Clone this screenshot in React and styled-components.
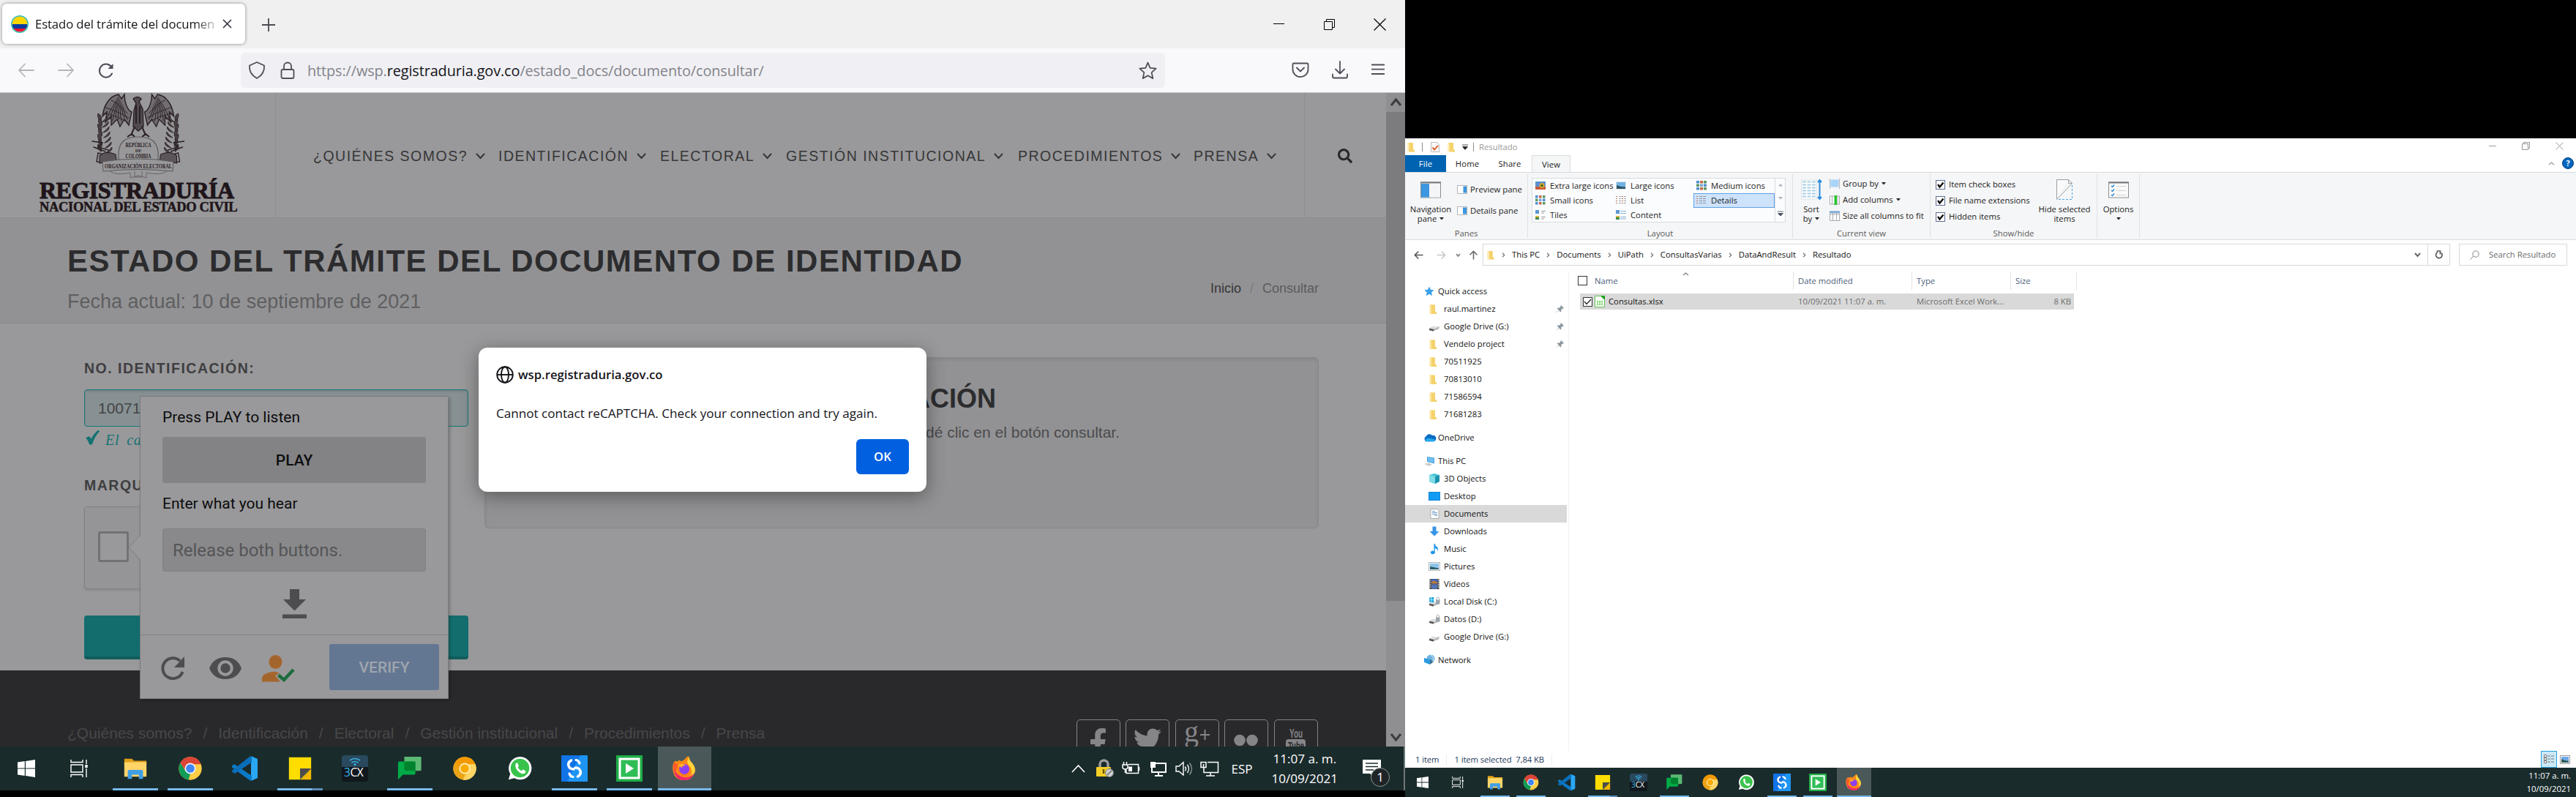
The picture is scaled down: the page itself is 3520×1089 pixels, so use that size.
import React from "react";
import styled, { createGlobalStyle, css } from "styled-components";
import { FaSearch, FaFacebookF, FaTwitter } from "react-icons/fa";

const ui = `"Open Sans", "Noto Sans", sans-serif`;
const arial = `"Liberation Sans", Arial, sans-serif`;
const roboto = `Roboto, sans-serif`;

const Global = createGlobalStyle`
  * { box-sizing: border-box; }
  html, body { margin: 0; padding: 0; background: #000; }
  svg { display: block; flex: none; overflow: visible; }
`;

const Desktop = styled.div`
  display: grid;
  grid-template-columns: 1920px 1600px;
  width: 3520px;
  height: 1089px;
  overflow: hidden;
  background: #000;
  white-space: nowrap;
`;
const Monitor = styled.div`
  display: flex;
  flex-direction: column;
  height: 1089px;
  padding-top: ${(p) => p.$top || 0}px;
`;
const Grow = styled.div`flex: 1;`;

/* ---------- browser chrome ---------- */
const TabStrip = styled.div`
  height: 66px;
  background: #f0f0f0;
  display: flex;
  padding: 5px 0 6px 3px;
`;
const Tab = styled.div`
  width: 332px;
  height: 55px;
  border-radius: 6px;
  background: #fff;
  box-shadow: 0 0 4px rgba(0, 0, 0, 0.45);
  display: flex;
  align-items: center;
  padding: 0 18px 0 12px;
  font: 16.7px/24px ${ui};
  color: #15141a;
`;
const TabTitle = styled.div`
  width: 252px;
  margin: 0 4px 0 9px;
  overflow: hidden;
  letter-spacing: -0.1px;
  -webkit-mask-image: linear-gradient(to right, #000 218px, transparent 254px);
`;
const NewTab = styled.div`
  margin: 3px 0 0 22px;
  height: 52px;
  display: flex;
  align-items: center;
`;
const WindowButtons = styled.div`
  display: flex;
  margin-top: -5px;
  height: 66px;
`;
const WindowButton = styled.div`
  width: 69px;
  display: flex;
  align-items: center;
  justify-content: center;
`;
const Toolbar = styled.div`
  height: 61px;
  background: #f9f9fb;
  border-bottom: 1px solid #c6c6c8;
  display: flex;
  align-items: center;
  padding: 0 23px 0 23px;
`;
const NavButtons = styled.div`
  width: 306px;
  display: flex;
  gap: 30px;
`;
const UrlBar = styled.div`
  width: 1263px;
  height: 48px;
  border-radius: 6px;
  background: #f0f0f4;
  display: flex;
  align-items: center;
  padding: 0 11px 0 10px;
  font: 19.9px/28px ${ui};
  letter-spacing: -0.12px;
  color: #83838a;
  b { font-weight: 400; color: #15141a; }
`;
const UrlText = styled.div`
  margin: 1px 0 0 17px;
  flex: 1;
`;
const ToolbarRight = styled.div`
  display: flex;
  gap: 30px;
  margin-left: 173px;
`;

/* ---------- web page ---------- */
const Viewport = styled.div`
  position: relative;
  height: 893px;
  display: flex;
  overflow: hidden;
  background: #99999b;
`;
const Page = styled.div`
  width: 1894px;
  font-family: ${arial};
`;
const Header = styled.div`
  height: 171px;
  display: flex;
  border-bottom: 1px solid #8c8c8e;
`;
const LogoCell = styled.div`
  width: 377px;
  border-right: 1px solid #8f8f91;
  padding: 0 0 0 54px;
  color: #20151a;
  font-family: "Liberation Serif", serif;
  font-weight: 700;
`;
const LogoName = styled.div`
  font-size: 32px;
  line-height: 30px;
  margin-top: -1px;
  letter-spacing: -0.5px;
  -webkit-text-stroke: 1px #20151a;
`;
const LogoSub = styled.div`
  font-size: 18.5px;
  line-height: 16px;
  letter-spacing: -0.34px;
  -webkit-text-stroke: 0.5px #20151a;
`;
const Menu = styled.div`
  width: 1406px;
  border-right: 1px solid #8f8f91;
  padding: 2px 0 0 51px;
  display: flex;
  align-items: center;
`;
const MenuItem = styled.div`
  width: ${(p) => p.$w}px;
  display: flex;
  align-items: center;
  gap: 11px;
  font-size: 19.5px;
  line-height: 24px;
  letter-spacing: 1.5px;
  color: #363638;
`;
const SearchCell = styled.div`
  flex: 1;
  padding: 2px 0 0 45px;
  display: flex;
  align-items: center;
  color: #29292b;
`;
const Band = styled.div`
  height: 144px;
  background: #929294;
  border-bottom: 1px solid #8a8a8c;
  padding: 0 92px;
  display: flex;
  justify-content: space-between;
`;
const BandTitle = styled.h1`
  margin: 34px 0 0 0;
  font-size: 42px;
  line-height: 50px;
  letter-spacing: 1.5px;
  color: #2c2c2e;
`;
const BandSub = styled.div`
  margin-top: 15px;
  font-size: 27px;
  line-height: 30px;
  color: #5f5f61;
`;
const Crumbs = styled.div`
  padding-top: 84px;
  display: flex;
  gap: 12px;
  font-size: 18px;
  line-height: 24px;
  color: #5a5a5c;
  span:first-child { color: #353537; }
  span:nth-child(2) { color: #79797b; }
`;
const Main = styled.div`
  height: 474px;
  display: flex;
  padding-left: 115px;
`;
const Form = styled.div`
  width: 525px;
  padding-top: 49px;
`;
const Label = styled.div`
  margin-top: ${(p) => p.$mt || 0}px;
  font-size: 19.5px;
  line-height: 24px;
  font-weight: 700;
  letter-spacing: 1.5px;
  color: #3e3e40;
`;
const TextInput = styled.div`
  margin-top: 17px;
  height: 51px;
  border: 1.5px solid #177878;
  border-radius: 4px;
  background: #879193;
  box-shadow: inset 0 2px 3px rgba(0, 0, 0, 0.12);
  padding: 0 18px;
  font-size: 21px;
  line-height: 49px;
  color: #444446;
`;
const Hint = styled.div`
  margin-top: 4px;
  height: 25px;
  display: flex;
  gap: 8px;
  padding-left: 2px;
  font: italic 20px/28px "Liberation Serif", serif;
  letter-spacing: 0.8px;
  word-spacing: 4px;
  color: #137272;
`;
const CaptchaBox = styled.div`
  margin-top: 17px;
  width: 400px;
  height: 113px;
  border: 1px solid #818183;
  border-radius: 4px;
  background: #959597;
  box-shadow: 0 2px 3px rgba(0, 0, 0, 0.1);
  padding: 33px 18px;
`;
const CaptchaCheck = styled.div`
  width: 42px;
  height: 42px;
  border: 3px solid #727274;
  border-radius: 3px;
  background: #99999b;
`;
const SubmitButton = styled.div`
  margin-top: 36px;
  height: 60px;
  border-radius: 4px;
  background: #146d6d;
  border-bottom: 4px solid #125d5d;
`;
const InfoPanel = styled.div`
  margin: 46px 0 0 22px;
  width: 1140px;
  height: 234px;
  border: 1px solid #87878a;
  border-radius: 6px;
  background: #929294;
  box-shadow: inset 0 3px 4px rgba(0, 0, 0, 0.07);
  padding: 36px 0 0 0;
  color: #4b4b4d;
`;
const InfoTitle = styled.div`
  width: 698px;
  text-align: right;
  font-size: 36px;
  line-height: 40px;
  font-weight: 700;
  color: #2c2c2e;
`;
const InfoText = styled.div`
  width: 867px;
  text-align: right;
  margin-top: 14px;
  font-size: 21px;
  line-height: 24px;
`;
const Footer = styled.div`
  height: 104px;
  background: #29292b;
  padding: 67px 93px 0 92px;
  display: flex;
  justify-content: space-between;
`;
const FooterLinks = styled.div`
  display: flex;
  gap: 15px;
  padding-top: 7px;
  font-size: 21px;
  line-height: 24px;
  color: #47474a;
`;
const Socials = styled.div`
  display: flex;
  gap: 7.6px;
`;
const Social = styled.div`
  width: 60px;
  height: 60px;
  border: 1.5px solid #848487;
  border-radius: 5px;
  display: flex;
  justify-content: center;
  padding-top: ${(p) => p.$pt}px;
  color: #858588;
`;
const ScrollBar = styled.div`
  width: 26px;
  background: #8f8f91;
  display: flex;
  flex-direction: column;
  align-items: center;
`;
const ScrollArrow = styled.div`
  height: 26px;
  display: flex;
  align-items: center;
`;
const ScrollThumb = styled.div`
  width: 26px;
  height: 668px;
  background: #7c7c7e;
`;

/* challenge popup floating over the form */
const Challenge = styled.div`
  position: absolute;
  left: 191px;
  top: 414px;
  width: 422px;
  height: 414px;
  border: 1px solid #7a7a7c;
  background: #99999b;
  box-shadow: 2px 2px 4px rgba(0, 0, 0, 0.22);
  font-family: ${roboto};
  font-size: 21px;
  line-height: 26px;
  color: #0c0c0d;
`;
const ChallengeArrow = styled.div`
  position: absolute;
  left: -17px;
  top: 189px;
`;
const ChallengeBody = styled.div`
  height: 326px;
  padding: 15px 30px 0;
  border-bottom: 1px solid #828284;
`;
const PlayButton = styled.div`
  margin: 14px 0 15px;
  height: 63px;
  border-radius: 3px;
  background: #838385;
  font-weight: 500;
  text-align: center;
  line-height: 64px;
`;
const AnswerInput = styled.div`
  margin: 21px 0 24px;
  height: 59px;
  border: 1px solid #828284;
  border-radius: 3px;
  background: #89898b;
  padding-left: 13px;
  font-size: 24px;
  line-height: 59px;
  color: #555557;
`;
const Centered = styled.div`
  display: flex;
  justify-content: center;
`;
const ChallengeFoot = styled.div`
  height: 86px;
  display: flex;
  align-items: center;
  padding: 2px 12px 0 26px;
`;
const FootIcons = styled.div`
  flex: 1;
  display: flex;
  align-items: center;
  gap: 32px;
  padding-top: 2px;
`;
const Verify = styled.div`
  width: 150px;
  height: 63px;
  margin-top: 4px;
  margin-bottom: 5px;
  border-radius: 3px;
  background: #647792;
  color: #9ea5ae;
  font-weight: 500;
  text-align: center;
  line-height: 64px;
`;

/* alert dialog */
const Dialog = styled.div`
  position: absolute;
  left: 654px;
  top: 348px;
  width: 612px;
  height: 197px;
  border-radius: 12px;
  background: #fff;
  box-shadow: 0 6px 26px rgba(0, 0, 0, 0.38);
  padding: 25px 24px;
  font: 17.1px/24px ${ui};
  color: #15141a;
`;
const DialogTitle = styled.div`
  display: flex;
  align-items: center;
  gap: 6px;
  font-size: 16.7px;
  font-weight: 600;
`;
const DialogText = styled.div`
  margin-top: 29px;
`;
const DialogButton = styled.div`
  width: 72px;
  height: 48px;
  margin: 23px 0 0 auto;
  border-radius: 6px;
  background: #0060df;
  color: #fff;
  font-weight: 600;
  font-size: 16.700px;
  text-align: center;
  line-height: 48px;
`;

/* ---------- taskbar ---------- */
const Bar = styled.div`
  height: ${(p) => 40 * p.$k}px;
  background: #1a2b2c;
  display: flex;
  color: #fff;
  font: ${(p) => 11.4 * p.$k}px/${(p) => p.$line}px ${ui};
`;
const SysCell = styled.div`
  width: ${(p) => 48 * p.$k}px;
  display: flex;
  align-items: center;
  justify-content: center;
`;
const AppCell = styled.div`
  width: ${(p) => p.$w}px;
  margin-left: ${(p) => p.$ml || 0}px;
  padding: 0 1px;
`;
const AppFace = styled.div`
  height: 100%;
  display: flex;
  flex-direction: column;
  align-items: center;
  justify-content: space-between;
  padding-top: ${(p) => 8 * p.$k}px;
  background: ${(p) => (p.$active ? "#4a5859" : "transparent")};
`;
const Underline = styled.div`
  width: ${(p) => (p.$full ? "100%" : "84%")};
  height: ${(p) => 2 * p.$k}px;
  background: ${(p) =>
    p.$split ? "linear-gradient(to right, #76b9ed 76%, #5a8db5 76%)" : p.$on ? "#76b9ed" : "transparent"};
`;
const Tray = styled.div`
  display: flex;
  align-items: center;
  width: 456px;
`;
const TrayItem = styled.div`
  width: ${(p) => p.$w}px;
`;
const Clock = styled.div`
  text-align: ${(p) => p.$align};
  width: ${(p) => p.$w}px;
  margin-right: ${(p) => p.$mr || 0}px;
  padding-top: ${(p) => p.$pt || 0}px;
`;
const Notice = styled.div`
  position: relative;
  margin-left: 23px;
  width: 56px;
`;
const Badge = styled.div`
  position: absolute;
  left: 11px;
  top: 12px;
  width: 26px;
  height: 26px;
  border-radius: 13px;
  border: 1.5px solid #8c9495;
  background: #1f2526;
  text-align: center;
  line-height: 23px;
  font-size: 17px;
`;
const PeekLine = styled.div`
  width: 2px;
  height: 100%;
  background: #6d7879;
`;

/* ---------- file explorer ---------- */
const Explorer = styled.div`
  height: 860px;
  background: #fff;
  display: flex;
  flex-direction: column;
  font: 11.3px/16px ${ui};
  color: #1b1b1b;
`;
const Caption = styled.div`
  height: 23px;
  display: flex;
  align-items: center;
  padding-left: 2px;
  color: #999;
`;
const CapSep = styled.div`
  width: 1px;
  height: 12px;
  background: #8e8e8e;
  margin: 0 ${(p) => p.$mr}px 0 ${(p) => p.$ml}px;
`;
const CapButton = styled.div`
  width: 45.5px;
  display: flex;
  justify-content: center;
  padding-bottom: 3px;
`;
const CapGap = styled.div`width: 10px;`;
const TabRow = styled.div`
  height: 23px;
  display: flex;
`;
const RibbonTab = styled.div`
  width: ${(p) => p.$w}px;
  line-height: 23px;
  text-align: center;
  letter-spacing: 0.1px;
  ${(p) => p.$file && css`background: #0063b1; color: #fff;`}
  ${(p) =>
    p.$active &&
    css`
      height: 24px;
      border: 1px solid #dadbdc;
      border-bottom: 0;
      background: #f5f6f7;
      margin-left: 1px;
    `}
`;
const Collapse = styled.div`padding-top: 9px;`;
const Help = styled.div`
  width: 16px;
  height: 16px;
  margin: 3px 3px 0 10px;
  border-radius: 8px;
  background: #0067c0;
  border: 1px solid #03407c;
  color: #fff;
  font-weight: 700;
  font-size: 11px;
  line-height: 14px;
  text-align: center;
`;
const Ribbon = styled.div`
  height: 93px;
  background: #f5f6f7;
  border-top: 1px solid #dadbdc;
  border-bottom: 1px solid #dadbdc;
  display: flex;
  padding-top: 2px;
`;
const Group = styled.div`
  width: ${(p) => p.$w}px;
  height: 87px;
  border-right: 1px solid #e0e1e3;
  display: flex;
  flex-direction: column;
`;
const GroupBody = styled.div`
  height: 74px;
  display: flex;
  padding-left: ${(p) => p.$pl || 0}px;
`;
const GroupName = styled.div`
  text-align: center;
  color: #5a5a5a;
  line-height: 13px;
`;
const BigButton = styled.div`
  width: ${(p) => p.$w}px;
  display: flex;
  flex-direction: column;
  align-items: center;
  padding-top: ${(p) => p.$pt || 7}px;
  line-height: 13px;
  text-align: center;
  svg + div { margin-top: ${(p) => p.$gap || 9}px; }
`;
const WithCaret = styled.div`
  display: flex;
  align-items: center;
  justify-content: center;
  gap: 4px;
  height: 13px;
`;
const SmallList = styled.div`
  display: flex;
  flex-direction: column;
  padding: ${(p) => p.$pt}px 0 0 ${(p) => p.$pl}px;
  gap: ${(p) => p.$gap}px;
`;
const SmallButton = styled.div`
  display: flex;
  align-items: center;
  gap: ${(p) => p.$g || 4}px;
  height: 16px;
`;
const Gallery = styled.div`
  margin: 5px 0 0 5px;
  width: 347px;
  height: 61px;
  border: 1px solid #dadbdc;
  background: #fbfcfe;
  display: flex;
`;
const GalleryGrid = styled.div`
  width: 331px;
  display: grid;
  grid-template-columns: 110px 110px 111px;
  grid-template-rows: 20px 20px 20px;
`;
const GalleryItem = styled.div`
  display: flex;
  align-items: center;
  gap: 6px;
  padding-left: 3px;
  border: 1px solid ${(p) => (p.$on ? "#62a2e4" : "transparent")};
  background: ${(p) => (p.$on ? "#cde2fb" : "transparent")};
  line-height: 16px;
  padding-bottom: 1px;
`;
const GalleryScroll = styled.div`
  flex: 1;
  border-left: 1px solid #dadbdc;
  display: flex;
  flex-direction: column;
  justify-content: space-around;
  align-items: center;
`;
const Check = styled.div`
  width: 13px;
  height: 13px;
  border: 1px solid ${(p) => p.$c || "#333"};
  background: #fff;
  flex: none;
`;
const AddressRow = styled.div`
  height: 43px;
  display: flex;
  padding: 5px 12px 0 12px;
`;
const AddressNav = styled.div`
  width: 94px;
  height: 30px;
  display: flex;
  align-items: center;
`;
const NavIcon = styled.div`
  width: ${(p) => p.$w}px;
`;
const AddressBox = styled.div`
  width: 1322px;
  height: 30px;
  border: 1px solid #d9d9d9;
  display: flex;
  align-items: center;
  padding-left: 4px;
  color: #111;
`;
const CrumbSep = styled.div`
  width: 23px;
  display: flex;
  justify-content: center;
`;
const Refresh = styled.div`
  width: 30px;
  height: 28px;
  border-left: 1px solid #d9d9d9;
  margin-left: 9px;
  display: flex;
  align-items: center;
  justify-content: center;
`;
const SearchBox = styled.div`
  margin-left: 12px;
  width: 148px;
  height: 30px;
  border: 1px solid #d9d9d9;
  display: flex;
  align-items: center;
  gap: 13px;
  padding-left: 14px;
  color: #6a6a6a;
`;
const Panes = styled.div`
  flex: 1;
  display: flex;
`;
const Tree = styled.div`
  width: 224px;
  height: 655px;
  border-right: 1px solid #f0f0f0;
  padding: 15px 2px 0 0;
  color: #111;
`;
const TreeRow = styled.div`
  height: 24px;
  margin-top: ${(p) => p.$mt || 0}px;
  padding-left: ${(p) => (p.$root ? 25 : 32)}px;
  padding-right: 3px;
  display: flex;
  align-items: center;
  gap: ${(p) => (p.$root ? 4 : 5)}px;
  background: ${(p) => (p.$on ? "#d9d9d9" : "transparent")};
`;
const TreeIcon = styled.div`width: 16px;`;
const List = styled.div`
  flex: 1;
`;
const ListHead = styled.div`
  height: 25px;
  display: flex;
  align-items: center;
  color: #4c607a;
  padding-left: 12px;
`;
const HeadCell = styled.div`
  position: relative;
  width: ${(p) => p.$w}px;
  height: 25px;
  padding-left: ${(p) => p.$pl}px;
  line-height: 25px;
  border-right: 1px solid #e3e3e3;
`;
const SortMark = styled.div`
  position: absolute;
  left: 130px;
  top: 1px;
`;
const FileRow = styled.div`
  margin: 5px 0 0 15px;
  width: 675px;
  height: 22px;
  background: #d9d9d9;
  display: flex;
  align-items: center;
  padding-left: 4px;
  color: #6d6d6d;
`;
const FileIcon = styled.div`
  width: 14px;
  margin: 0 5px 0 3px;
`;
const FileCell = styled.div`
  width: ${(p) => p.$w}px;
  color: ${(p) => p.$c || "inherit"};
  text-align: ${(p) => p.$align || "left"};
`;
const Status = styled.div`
  height: 23px;
  display: flex;
  align-items: center;
  padding: 0 8px 0 14px;
  color: #1e395b;
  letter-spacing: -0.1px;
`;
const StatSep = styled.div`
  width: 1px;
  height: 14px;
  margin: 0 10px;
  background: #ececec;
`;
const ViewToggle = styled.div`
  width: 22px;
  height: 23px;
  border: 1px solid #26a0da;
  background: #cbe8f6;
  display: flex;
  align-items: center;
  justify-content: center;
  margin-right: 4px;
`;

/* ---------- drawing helpers ---------- */
const Svg = ({ w, h = w, vb, children, ...rest }) => (
  <svg width={w} height={h} viewBox={vb || `0 0 ${w} ${h}`} fill="none" {...rest}>
    {children}
  </svg>
);
const EmblemBox = styled.div`
  width: 130px;
  margin-left: 70px;
`;
const LockIcon = styled.div`margin-left: 20px;`;
const PersonIcon = styled.div`margin-left: -4px;`;
const CaptionCaret = styled.div`margin-left: 9px;`;

const Chevron = ({ w = 12, h = 7, c = "#363638", sw = 2, up }) => (
  <Svg w={w} h={h} stroke={c} strokeWidth={sw}>
    <path d={up ? `M1 ${h - 1}L${w / 2} 1L${w - 1} ${h - 1}` : `M1 1L${w / 2} ${h - 1}L${w - 1} 1`} />
  </Svg>
);
const Caret = ({ c = "#222" }) => <Svg w={6} h={4}><path d="M0 0h6L3 3.5z" fill={c} /></Svg>;

const Emblem = () => {
  const ink = "#2a2024";
  const side = (key, transform) => (
    <g key={key} transform={transform} stroke={ink} strokeLinecap="round">
      <path d="M38 2C26 4 18 16 16 32L22 26L20 40L28 32L28 44L36 36L40 46L46 36L52 44L56 26C50 24 46 12 46 2L42 8Z" fill="#716c71" strokeWidth="1.4" />
      {[0, 1, 2, 3, 4, 5, 6, 7].map((i) => (
        <path key={i} d={`M${22 + i * 4} ${34 + (i % 3) * 2}Q${28 + i * 2} ${20} ${38 + i} ${6 + i * 2}`} strokeWidth="1" />
      ))}
      <path d="M20 20Q34 24 52 34M18 28Q34 30 50 40M28 10Q38 14 50 28" strokeWidth="0.9" />
      {[0, 1, 2, 3, 4, 5, 6].map((i) => (
        <g key={i} fill="#4a4247" strokeWidth="0.9">
          <path d={`M${14 + (i % 2)} ${38 + i * 7}q-6 -4 -4 -10q6 3 4 10z`} />
          <path d={`M${15 + i} ${40 + i * 7}q5 -4 8 -8q1 6 -8 8z`} />
        </g>
      ))}
      <path d="M2 66L16 68L10 74L24 78M4 74L20 80M10 82L24 86L22 96L8 94Z" strokeWidth="1.4" />
      <path d="M12 86Q20 78 34 84L36 98Q24 92 12 96Z" fill="#5b5559" strokeWidth="1.1" />
    </g>
  );
  return (
    <Svg w={130} h={119}>
      {side("l")}
      {side("r", "translate(129.5 0) scale(-1 1)")}
      <path d="M58 8q6-5 11 0l-3 4l5 10l1 24l-7 6l-7-6l1-22l3-10z" fill="#514b50" stroke={ink} strokeWidth="1.4" />
      <path d="M60 46l-5 12M70 46l5 12M50 60l6-4l4 4M70 60l5-4l5 4M62 16v26M67 18v24" stroke={ink} strokeWidth="2" />
      <path d="M38 90C36 66 48 60 65 60S94 66 92 90L90 99Q65 90 40 99Z" fill="#98989a" stroke="#5c575b" strokeWidth="1.2" />
      <g fill={ink} fontFamily="Liberation Serif, serif" fontSize="8" textAnchor="middle">
        <text x="65" y="74" textLength="35" lengthAdjust="spacingAndGlyphs">REPÚBLICA</text>
        <text x="65" y="81" fontSize="6">DE</text>
        <text x="65" y="89" textLength="35" lengthAdjust="spacingAndGlyphs">COLOMBIA</text>
      </g>
      <path d="M16 94Q65 86 113 94L112 107Q65 102 17 107Z" fill="#98989a" stroke="#5c575b" strokeWidth="1" />
      <text x="65" y="103" textLength="92" lengthAdjust="spacingAndGlyphs" textAnchor="middle" fontFamily="Liberation Serif, serif" fontWeight="700" fontSize="9" fill={ink}>
        ORGANIZACIÓN ELECTORAL
      </text>
      <path d="M26 107q8 6 28 2v7l11-3l11 3v-7q20 4 28-2M60 107v8h10v-8" stroke="#68636a" strokeWidth="1" />
    </Svg>
  );
};

const WindowsLogo = ({ k }) => (
  <Svg w={16 * k} vb="0 0 24 24">
    <path fill="#fff" d="M0 3.4L9.8 2v9.4H0zM11 1.9L24 0v11.4H11zM0 12.6h9.8V22L0 20.6zM11 12.6h13V24L11 22.1z" />
  </Svg>
);
const TaskView = ({ k }) => (
  <Svg w={16 * k} vb="0 0 24 24" stroke="#fff" strokeWidth="1.4">
    <path d="M1 0v3.5h16V0M1 7h16v10H1zM1 24v-3.500h16V24M22 0v6M22 12v12" />
    <path d="M22 7v4" strokeWidth="3.500" />
  </Svg>
);

const art = {
  folder: (
    <>
      <path d="M2 4h11l3 3h18v5H2z" fill="#e0a019" />
      <rect x="2" y="9" width="32" height="21" rx="1" fill="#ffd568" />
      <path d="M7 33V22q0-2 2-2h18q2 0 2 2v11h-6v-6H13v6z" fill="#3f9fe6" />
    </>
  ),
  chrome: (
    <>
      <circle cx="18" cy="18" r="16.500" fill="#ffce44" />
      <path d="M3.700 9.800A16.500 16.500 0 0 1 33.500 12H18L11 22Z" fill="#db4437" />
      <path d="M3.700 9.800L11 22L18 26L15.500 34.300A16.500 16.500 0 0 1 3.700 9.800Z" fill="#0f9d58" />
      <circle cx="18" cy="18" r="8" fill="#f4f4f4" />
      <circle cx="18" cy="18" r="6.200" fill="#4285f4" />
    </>
  ),
  code: (
    <>
      <path d="M26 1L35 5V31L26 35Z" fill="#2aa7f2" />
      <path d="M0 14.500L3 12L27 28V35L24 34L0 16.500Z" fill="#0b7bc8" />
      <path d="M0 21L24 2L27 1V9.500L4 25L0 22.500Z" fill="#0a6fbb" />
    </>
  ),
  sticky: (
    <>
      <path d="M2 2H34V18L20 34H2Z" fill="#ffdd00" />
      <path d="M34 18V34H20Z" fill="#f2b800" />
      <path d="M18 18H34L18 34Z" fill="#4b4b4b" />
    </>
  ),
  cx: (
    <>
      <rect x="0" y="0" width="36" height="36" rx="3" fill="#10171d" />
      <path d="M3 0h30q3 0 3 3v13H0V3q0-3 3-3z" fill="#29495e" />
      <path d="M11 7q7-5 14 0M13.500 10q4.500-3 9 0" stroke="#38b4e8" strokeWidth="1.600" />
      <circle cx="18" cy="12.500" r="1.600" fill="#38b4e8" />
      <text x="3" y="29" fontFamily="Open Sans, sans-serif" fontSize="15.500" letterSpacing="-0.4" fill="#fff">
        <tspan fill="#38b4e8">3</tspan>CX
      </text>
    </>
  ),
  chat: (
    <>
      <path d="M10 1h23q1.500 0 1.500 1.500v17q0 2-2 2H10z" fill="#5bb974" />
      <path d="M3 8h22q1 0 1 1v16q0 2-2 2H8l-7 7V10q0-2 2-2z" fill="#00ac47" />
      <path d="M10 8h15q1 0 1 1v12.500H13q-3 0-3-3V8z" fill="#00832d" />
    </>
  ),
  canary: (
    <>
      <circle cx="18" cy="18" r="16.500" fill="#fbc02d" />
      <path d="M3.700 9.800A16.500 16.500 0 0 1 33.500 12H18L11 22Z" fill="#f29900" />
      <path d="M3.700 9.800L11 22L18 26L15.500 34.300A16.500 16.500 0 0 1 3.700 9.800Z" fill="#e8a317" />
      <path d="M33.500 12A16.500 16.500 0 0 1 15.500 34.300L24 22V12Z" fill="#ffd666" />
      <circle cx="18" cy="18" r="8" fill="#fff3c4" />
      <circle cx="18" cy="18" r="6.200" fill="#f9ab00" />
    </>
  ),
  whatsapp: (
    <>
      <path d="M2 34L4.500 26A16.500 16.500 0 1 1 10.500 32Z" fill="#fff" />
      <circle cx="18.500" cy="17.500" r="13.500" fill="#3ac34c" />
      <path d="M12.500 10.500q2-1.500 3 .5l1.200 3q.3 1-1.200 2.300q2 4 5.500 5.200q1.500-2 2.300-1.800l3.200 1.600q1 3-2.500 4.200q-4 .8-8.500-3.700q-5-5.500-3-11.300z" fill="#fff" />
    </>
  ),
  studio: (
    <>
      <rect width="36" height="36" fill="#1173e6" />
      <path d="M26 0H36V36H8Z" fill="#1e94f3" />
      <path d="M13.500 7q-5 3-3.500 7.500t7 4.500M22.500 29q5-3 3.500-7.500T19 17" stroke="#fff" strokeWidth="3.600" strokeLinecap="round" />
      <path d="M20 6.500q4 .5 5 4.500M16 29.500q-4-.5-5-4.500" stroke="#fff" strokeWidth="3.200" strokeLinecap="round" />
    </>
  ),
  play: (
    <>
      <rect width="36" height="36" fill="#1fae46" />
      <rect x="5" y="5" width="26" height="26" stroke="#fff" strokeWidth="3" fill="#2fbd55" />
      <path d="M13 11L24 18L13 25Z" fill="#fff" />
    </>
  ),
  firefox: (
    <>
      <path d="M3 9Q5 6 8 8Q12 4 13 8Q19 6 21 2Q24 0 25 1Q25 6 30 11Q35 18 33 24Q29 35 18 35Q5 35 2 23Q0 16 3 9Z" fill="#ff8a16" />
      <path d="M25 1Q25 6 30 11Q35 18 33 24Q31 29 27 32Q32 20 25 14Q20 9 25 1Z" fill="#ffd43a" />
      <path d="M3 18Q4 35 18 35Q29 35 33 24Q27 32 18 31Q7 29 3 18Z" fill="#f0256f" />
      <path d="M2 20Q2 12 4 9Q7 12 9 12L6 22Z" fill="#ff5a2c" />
      <circle cx="18" cy="19" r="7.500" fill="#8b3ff0" />
      <path d="M9 14Q14 9 21 14Q15 13 15 17Q12 15 9 14Z" fill="#ffb12b" />
      <path d="M10.500 17Q11 26 18 27Q24 27 26 21Q26 29 18 30Q9 29 10.500 17Z" fill="#ff7b1a" />
    </>
  ),
};
const apps = [
  ["folder", 1], ["chrome", 1], ["code", 0], ["sticky", 2], ["cx", 0], ["chat", 1],
  ["canary", 0], ["whatsapp", 0], ["studio", 1], ["play", 1], ["firefox", 3],
];
const padded = ["folder", "chrome", "sticky", "canary", "chat", "whatsapp", "firefox"];
const TaskApps = ({ k, w, ml }) => (
  <>
    <SysCell $k={k}><WindowsLogo k={k} /></SysCell>
    <SysCell $k={k}><TaskView k={k} /></SysCell>
    {apps.map(([name, state], i) => (
      <AppCell key={name} $w={w} $ml={i ? 0 : ml}>
        <AppFace $k={k} $active={state === 3}>
          <Svg w={24 * k} vb={padded.includes(name) ? "-1 -1 38 38" : "0 0 36 36"}>{art[name]}</Svg>
          <Underline $k={k} $on={state > 0} $split={state === 2} $full={state === 3} />
        </AppFace>
      </AppCell>
    ))}
  </>
);

/* small explorer icons */
const FolderMini = ({ h = 14 }) => (
  <Svg w={12} h={h} vb="0 0 12 14">
    <path d="M1 1h7v12H1z" fill="#fbe49a" /><path d="M3 1h6v9l2 1v2.500H3z" fill="#f5d26c" /><path d="M1 1l2.500 1v12L1 12.500z" fill="#fdeebb" />
  </Svg>
);
const Drive = ({ win, lock }) => (
  <Svg w={16}>
    <path d="M1 10.500L6 8h9l-1 3.500L6 14.500L1 13z" fill="#b5b7b8" /><path d="M1 11l6 1v2.500L1 13z" fill="#4d4f50" /><path d="M2 10.300L7 8h8L7.500 11.500z" fill="#dfe1e2" />
    {win && <path d="M1 2.500h2.600v3H1zM4.200 2h3v3.500h-3zM1 6.100h2.600V9L1 8.600zM4.200 6.100h3v3.200l-3-.3z" fill="#19a9e5" />}
    {lock && <><path d="M11 6V3.500a1.800 1.800 0 0 1 3.500 0V6" stroke="#a7acb0" /><rect x="10" y="5.500" width="5.500" height="6" fill="#9da5ab" /></>}
  </Svg>
);
const treeArt = {
  star: <Svg w={16}><path d="M8 1.500l1.900 4.200l4.600.5l-3.400 3.200l.9 4.800L8 11.800L3.700 14.200l1-4.800L1.500 6.200l4.500-.5z" fill="#3aa0e8" /></Svg>,
  folder: <FolderMini h={15} />,
  drive: <Drive />,
  disk: <Drive win lock />,
  data: <Drive lock />,
  cloud: <Svg w={16}><path d="M4 13a3.500 3.500 0 0 1-.5-6.500A5 5 0 0 1 12 5a4 4 0 0 1 2.500 8z" fill="#0a6cc4" /><path d="M2 12q3-5 7-3l6.500 1.500q1 2.500-1.500 3H4q-1.500 0-2-1.500z" fill="#28a8ea" /></Svg>,
  pc: <Svg w={16}><path d="M5 2l10 1.500v8L5 9z" fill="#4a9fd8" /><path d="M6 3l8 1.300v6L6 8.200z" fill="#6fc0f5" /><path d="M1 12l6-1.500l5 2l-4 2.500z" fill="#c9cdd1" /></Svg>,
  cube: <Svg w={16}><path d="M1 3l7-2l7 2v9l-7 3l-7-3z" fill="#45c5d8" /><path d="M1 3l8 2v10l-8-3z" fill="#7fdce6" /><path d="M9 5l6-2v9l-6 3z" fill="#1c93ae" /></Svg>,
  desktop: <Svg w={16}><rect x=".5" y="2.500" width="15" height="11" fill="#109cf5" stroke="#1688d2" /></Svg>,
  doc: <Svg w={16}><path d="M3 1.500h9l2 2v11H3z" fill="#fff" stroke="#a9adb0" /><path d="M5 4.500h4M5 6.500h7M5 8.500h7M8 10.500h4" stroke="#6f9fc9" /></Svg>,
  down: <Svg w={16}><path d="M5.500 1.500h5v6.500h4L8 14.500L1.500 8h4z" fill="#3794e6" /></Svg>,
  music: <Svg w={16}><path d="M7.500 1h1.300q.5 3 3 4.500q2 2 .5 5.500q0-3-3.500-4v6a3 2.300 0 1 1-1.300-2z" fill="#1e96e8" /></Svg>,
  pic: <Svg w={16}><rect x=".5" y="2.500" width="15" height="11" fill="#f4f6f7" stroke="#b5b9bc" /><rect x="2" y="4" width="12" height="8" fill="#8cc3ec" /><path d="M2 8l5 1l7 1.500V12H2z" fill="#2e5d6e" /></Svg>,
  video: <Svg w={16}><rect x="1.500" y="1" width="13" height="14" fill="#4c4c4e" /><rect x="4" y="1.500" width="8" height="6" fill="#3d67c9" /><rect x="4" y="8.500" width="8" height="6" fill="#5375b8" /><path d="M4 5l4-2l4 3v1.500H4z" fill="#b8793a" /><path d="M2.700 2v12M13.300 2v12" stroke="#ddd" strokeDasharray="1.500 1.500" /></Svg>,
  net: <Svg w={16}><circle cx="10" cy="6" r="5.500" fill="#6fb3dc" /><path d="M1 5l8 2v7l-8-3z" fill="#2c9ce0" /><path d="M9 7l5 3l-5 4z" fill="#3c6f92" /><path d="M10 1q5 3 3 9" stroke="#dbeefa" /></Svg>,
};
const tree = [
  ["star", "Quick access", { root: 1 }], ["folder", "raul.martinez", { pin: 1 }], ["drive", "Google Drive (G:)", { pin: 1 }],
  ["folder", "Vendelo project", { pin: 1 }], ["folder", "70511925"], ["folder", "70813010"], ["folder", "71586594"], ["folder", "71681283"],
  ["cloud", "OneDrive", { root: 1, mt: 8 }], ["pc", "This PC", { root: 1, mt: 8 }], ["cube", "3D Objects"], ["desktop", "Desktop"],
  ["doc", "Documents", { on: 1 }], ["down", "Downloads"], ["music", "Music"], ["pic", "Pictures"], ["video", "Videos"],
  ["disk", "Local Disk (C:)"], ["data", "Datos (D:)"], ["drive", "Google Drive (G:)"], ["net", "Network", { root: 1, mt: 8 }],
];
const Pin = () => (
  <Svg w={12}><path d="M7 1l4 4l-1 .7l-.8-.3l-2 2l.2 2l-1 1L4 8L1 11.300L.7 11L4 7.500L1.600 5.500l1-1l2 .2l2-2L6.300 2z" fill="#8b979f" /></Svg>
);
const PaneIcon = ({ x, w }) => (
  <Svg w={14} h={12}><rect x=".5" y=".5" width="13" height="11" fill="#fff" stroke="#b3b6b9" /><rect x={x} y="1.500" width={w} height="9" fill="#3d96e0" /></Svg>
);
const Layout = ({ t }) => (
  <Svg w={14} h={13}>
    {t === "xl" && <><rect y="1" width="14" height="11" fill="#5b8fd0" /><path d="M0 8h14v4H0z" fill="#c9583c" /><circle cx="9" cy="6.500" r="3.500" fill="#dba62a" /><circle cx="9" cy="6.500" r="1.500" fill="#29592c" /></>}
    {t === "lg" && <><rect y="1" width="14" height="11" fill="#dfe6ea" /><rect x="1" y="2" width="12" height="9" fill="#6fb2e4" /><path d="M1 6l6 2l6 .5V11H1z" fill="#2c5568" /></>}
    {(t === "md" || t === "sm") && [0, 1, 2].map((r) => [0, 1, 2].map((c) => (
      <rect key={`${r}${c}`} x={c * 5} y={r * 4.500} width={t === "md" ? 4 : 3.500} height="3.500" fill={["#4f8ed1", "#c06a4b", "#5c9a62", "#7ba5cf"][(r * 2 + c) % 4]} />
    )))}
    {t === "list" && <path d="M4 1.500h3M4 4.500h3M4 7.500h3M4 10.500h3M11 1.500h3M11 4.500h3M11 7.500h3M11 10.500h3" stroke="#9b9ea1" />}
    {t === "list" && <path d="M0 1.500h2M0 4.500h2M0 7.500h2M0 10.500h2M8 1.500h2M8 4.500h2M8 7.500h2M8 10.500h2" stroke="#b9745c" />}
    {t === "det" && <><path d="M4 1.500h10M4 4.500h10M4 7.500h10M4 10.500h10" stroke="#8f9499" strokeDasharray="4 1" /><path d="M0 1.500h2M0 4.500h2M0 7.500h2M0 10.500h2" stroke="#b9745c" /></>}
    {(t === "tile" || t === "cont") && <><rect x="0" y="0" width="5" height="5" fill="#5d97cf" /><rect x="0" y="8" width="5" height="5" fill="#d8b53c" /><rect x="0" y="10" width="5" height="3" fill="#3f8a50" /><path d={t === "tile" ? "M8 1.500h6M8 4h4M8 9.500h6M8 12h4" : "M6 1.500h8M6 4.500h8M6 9.500h8M6 12h8"} stroke={t === "tile" ? "#9b9ea1" : "#89aed4"} /></>}
  </Svg>
);
const galleryItems = [
  ["xl", "Extra large icons"], ["lg", "Large icons"], ["md", "Medium icons"],
  ["sm", "Small icons"], ["list", "List"], ["det", "Details"], ["tile", "Tiles"], ["cont", "Content"],
];
const TickBox = () => (
  <Check $c="#5e6f92"><Svg w={11}><path d="M2 5l2.500 3.500L9.500 2.500" stroke="#111" strokeWidth="2.400" /></Svg></Check>
);
const CrumbArrow = () => <Svg w={5} h={7} stroke="#777" strokeWidth="1.300"><path d="M1 .8L3.700 3.500L1 6.200" /></Svg>;
const Arrow = ({ dir, c }) => (
  <Svg w={13} stroke={c} strokeWidth="1.600">
    <path d="M12.500 6.500H1.500M6.300 1.500L1.300 6.500L6.300 11.500" transform={dir ? `rotate(${dir} 6.500 6.500)` : undefined} />
  </Svg>
);

const BrowserArrow = ({ flip }) => (
  <Svg w={25} h={24} stroke="#b6b6ba" strokeWidth="1.800" strokeLinecap="round" strokeLinejoin="round">
    <path d="M23 12H3M11 3.500L3 12L11 20.500" transform={flip ? "rotate(180 12.500 12)" : undefined} />
  </Svg>
);

const menu = [
  ["¿QUIÉNES SOMOS?", 253], ["IDENTIFICACIÓN", 221], ["ELECTORAL", 172],
  ["GESTIÓN INSTITUCIONAL", 317], ["PROCEDIMIENTOS", 240], ["PRENSA", 113],
];
const footerLinks = ["¿Quiénes somos?", "Identificación", "Electoral", "Gestión institucional", "Procedimientos", "Prensa"];

function Browser() {
  return (
    <>
      <TabStrip>
        <Tab>
          <Svg w={24}>
            <clipPath id="flag"><circle cx="12" cy="12" r="10.500" /></clipPath>
            <g clipPath="url(#flag)"><rect width="24" height="12" fill="#ffd500" /><rect y="12" width="24" height="6" fill="#0b3ba0" /><rect y="18" width="24" height="6" fill="#f5122e" /></g>
            <circle cx="12" cy="12" r="11.200" stroke="#35b8a8" strokeWidth="1.500" />
          </Svg>
          <TabTitle>Estado del trámite del documen</TabTitle>
          <Svg w={13} stroke="#2b2a33" strokeWidth="1.500"><path d="M1 1L12 12M12 1L1 12" /></Svg>
        </Tab>
        <NewTab><Svg w={20} stroke="#4a4a50" strokeWidth="1.800"><path d="M10 1v18M1 10h18" /></Svg></NewTab>
        <Grow />
        <WindowButtons>
          <WindowButton><Svg w={15} stroke="#000" strokeWidth="1"><path d="M0 6.500h15" /></Svg></WindowButton>
          <WindowButton><Svg w={15} stroke="#000" strokeWidth="1"><path d="M.5 3.500h11v11H.5zM3.500 3.500v-3h11v11h-3" /></Svg></WindowButton>
          <WindowButton><Svg w={17} stroke="#000" strokeWidth="1.200"><path d="M.5 .5L16.500 16.500M16.500 .5L.5 16.500" /></Svg></WindowButton>
        </WindowButtons>
      </TabStrip>
      <Toolbar>
        <NavButtons>
          <BrowserArrow /><BrowserArrow flip />
          <Svg w={24} stroke="#4f4e58" strokeWidth="2" strokeLinecap="round"><path d="M20 16.500A9 9 0 1 1 18.500 6.500" /><path d="M21.500 3v7h-7z" fill="#4f4e58" stroke="none" /></Svg>
        </NavButtons>
        <UrlBar>
          <Svg w={24} stroke="#4f4e58" strokeWidth="1.800" strokeLinejoin="round"><path d="M12 1L22 5.500Q23 17 12 23Q1 17 2 5.500Z" /></Svg>
          <LockIcon><Svg w={20} h={24} stroke="#4f4e58" strokeWidth="1.800"><rect x="1.500" y="11" width="17" height="12" rx="2" /><path d="M5 11V6.500a5 5 0 0 1 10 0V11" /></Svg></LockIcon>
          <UrlText>https://wsp.<b>registraduria.gov.co</b>/estado_docs/documento/consultar/</UrlText>
          <Svg w={25} vb="0 0 24 24" stroke="#4f4e58" strokeWidth="1.700" strokeLinejoin="round"><path d="M12 1.500l3 7l7.700.8l-5.800 5.200l1.700 7.700L12 18.500l-6.600 3.700l1.700-7.700L1.300 9.300L9 8.500z" /></Svg>
        </UrlBar>
        <ToolbarRight>
          <Svg w={24} stroke="#4f4e58" strokeWidth="1.800" strokeLinejoin="round" strokeLinecap="round"><path d="M3 2.500h18q1.500 0 1.500 1.500v7a10.500 10 0 0 1-21 0V4q0-1.500 1.500-1.500zM7 8.500l5 5l5-5" /></Svg>
          <Svg w={24} stroke="#4f4e58" strokeWidth="1.800" strokeLinejoin="round" strokeLinecap="round"><path d="M12 0v16M6 10.500l6 6l6-6M2 17.500v3q0 2 2 2h16q2 0 2-2v-3" /></Svg>
          <Svg w={20} h={24} stroke="#4f4e58" strokeWidth="1.800"><path d="M1 4.500h18M1 10.700h18M1 17h18" /></Svg>
        </ToolbarRight>
      </Toolbar>
      <Viewport>
        <Page>
          <Header>
            <LogoCell>
              <EmblemBox><Emblem /></EmblemBox>
              <LogoName>REGISTRADURÍA</LogoName>
              <LogoSub>NACIONAL DEL ESTADO CIVIL</LogoSub>
            </LogoCell>
            <Menu>{menu.map(([t, w]) => <MenuItem key={t} $w={w}>{t}<Chevron w={13} h={8} /></MenuItem>)}</Menu>
            <SearchCell><FaSearch size={20} /></SearchCell>
          </Header>
          <Band>
            <div>
              <BandTitle>ESTADO DEL TRÁMITE DEL DOCUMENTO DE IDENTIDAD</BandTitle>
              <BandSub>Fecha actual: 10 de septiembre de 2021</BandSub>
            </div>
            <Crumbs><span>Inicio</span><span>/</span><span>Consultar</span></Crumbs>
          </Band>
          <Main>
            <Form>
              <Label>NO. IDENTIFICACIÓN:</Label>
              <TextInput>10071</TextInput>
              <Hint>
                <Svg w={19} h={21}><path d="M1 11.500q3-3 5-1l1.500 3Q11 6 17 1l1.500 1.500Q12 9 8.500 20H5.500Q4 15 1 11.500Z" fill="#137272" stroke="#137272" /></Svg>
                El ca
              </Hint>
              <Label $mt={39}>MARQU</Label>
              <CaptchaBox><CaptchaCheck /></CaptchaBox>
              <SubmitButton />
            </Form>
            <InfoPanel>
              <InfoTitle>ACIÓN</InfoTitle>
              <InfoText>dé clic en el botón consultar.</InfoText>
            </InfoPanel>
          </Main>
          <Footer>
            <FooterLinks>
              {footerLinks.map((t, i) => <React.Fragment key={t}>{i > 0 && <span>/</span>}<span>{t}</span></React.Fragment>)}
            </FooterLinks>
            <Socials>
              <Social $pt={11}><FaFacebookF size={39} /></Social>
              <Social $pt={8}><FaTwitter size={38} /></Social>
              <Social $pt={7}>
                <Svg w={40} h={44}><text x="2" y="22" fontFamily="Liberation Serif, serif" fontSize="40" fill="#858588">g</text><path d="M24 13h13M30.500 6v14" stroke="#858588" strokeWidth="2" /></Svg>
              </Social>
              <Social $pt={18}><Svg w={36} h={18}><circle cx="9" cy="9.500" r="7.800" fill="#858588" /><circle cx="26" cy="9.500" r="7.800" fill="#858588" /></Svg></Social>
              <Social $pt={8}>
                <Svg w={30} h={44}>
                  <text x="15" y="16" textAnchor="middle" textLength="18" lengthAdjust="spacingAndGlyphs" fontFamily="Liberation Sans, sans-serif" fontWeight="700" fontSize="16" fill="#858588">You</text>
                  <rect x="1" y="18" width="27" height="22" rx="4" fill="#858588" />
                  <text x="15" y="32" textAnchor="middle" textLength="22" lengthAdjust="spacingAndGlyphs" fontFamily="Liberation Sans, sans-serif" fontWeight="700" fontSize="14" fill="#29292b">Tube</text>
                </Svg>
              </Social>
            </Socials>
          </Footer>
        </Page>
        <ScrollBar>
          <ScrollArrow><Chevron w={15} h={10} c="#3c3c3e" sw={3} up /></ScrollArrow>
          <ScrollThumb />
          <Grow />
          <ScrollArrow><Chevron w={15} h={10} c="#3c3c3e" sw={3} /></ScrollArrow>
        </ScrollBar>

        <Challenge>
          <ChallengeArrow><Svg w={18} h={34}><path d="M17.500 0L1 17L17.500 34Z" fill="#99999b" /><path d="M16.500 0L1 17L16.500 34" stroke="#7f7f81" /></Svg></ChallengeArrow>
          <ChallengeBody>
            <div>Press PLAY to listen</div>
            <PlayButton>PLAY</PlayButton>
            <div>Enter what you hear</div>
            <AnswerInput>Release both buttons.</AnswerInput>
            <Centered><Svg w={34} h={40}><path d="M11 0h13v14h9L17.500 29.500L2 14h9zM1 34.500h33V40H1z" fill="#4d4d4f" /></Svg></Centered>
          </ChallengeBody>
          <ChallengeFoot>
            <FootIcons>
              <Svg w={36}><path d="M31.500 23A14 14 0 1 1 28 8" stroke="#4d4d4f" strokeWidth="4" fill="none" /><path d="M34 2v15H20z" fill="#4d4d4f" /></Svg>
              <Svg w={44} h={32}><path d="M0 16Q6 1 22 1T44 16Q38 31 22 31T0 16Z" fill="#4d4d4f" /><circle cx="22" cy="16" r="8.700" stroke="#99999b" strokeWidth="4" /></Svg>
              <PersonIcon>
                <Svg w={46} h={38}>
                  <ellipse cx="18.500" cy="10.500" rx="9" ry="9.500" fill="#a4652d" /><path d="M0 37.500V32Q2 25 18 23.500L24 26L18 29L25 37.500Z" fill="#a4652d" />
                  <path d="M22.500 28.500L30 35L43 21" stroke="#1c6b3c" strokeWidth="4.500" />
                </Svg>
              </PersonIcon>
            </FootIcons>
            <Verify>VERIFY</Verify>
          </ChallengeFoot>
        </Challenge>

        <Dialog>
          <DialogTitle>
            <Svg w={24} stroke="#15141a" strokeWidth="1.900"><circle cx="12" cy="12" r="10.800" /><ellipse cx="12" cy="12" rx="5" ry="10.800" /><path d="M1 12h22" /></Svg>
            wsp.registraduria.gov.co
          </DialogTitle>
          <DialogText>Cannot contact reCAPTCHA. Check your connection and try again.</DialogText>
          <DialogButton>OK</DialogButton>
        </Dialog>
      </Viewport>

      <Bar $k={1.5} $line={27}>
        <TaskApps k={1.5} w={75} ml={3.5} />
        <Grow />
        <Tray>
          <TrayItem $w={33}><Chevron w={19} h={11} c="#fff" sw={1.6} up /></TrayItem>
          <TrayItem $w={36}>
            <Svg w={25}><path d="M6 11V6a5.500 5 0 0 1 11 0v5" stroke="#9c9c9c" strokeWidth="3.500" /><rect x="1" y="10" width="20" height="13" rx="1" fill="#f4cf25" /><path d="M11 13v6" stroke="#6b5600" strokeWidth="2.500" /><circle cx="19" cy="18" r="5.500" fill="#cfcfcf" stroke="#777" /><path d="M16 21l6-6" stroke="#666" strokeWidth="1.500" /></Svg>
          </TrayItem>
          <TrayItem $w={38}>
            <Svg w={25} h={24} stroke="#fff" strokeWidth="1.500"><path d="M9 6.500h13.500v12H6v-5M23.500 10v5" /><path d="M1 7h7v3q0 3-3.500 3T1 10zM2.500 3v4M6.500 3v4M4.500 13v5" /><rect x="9" y="9.500" width="5" height="6.500" fill="#fff" stroke="none" /></Svg>
          </TrayItem>
          <TrayItem $w={35}>
            <Svg w={24} stroke="#fff" strokeWidth="2"><path d="M5 5h17v12H3V9M12 17v4M7 22h11" /><path d="M1 3h7v8H1z" fill="#fff" stroke="none" /></Svg>
          </TrayItem>
          <TrayItem $w={34}>
            <Svg w={24} stroke="#fff" strokeWidth="1.400"><path d="M1 9v7h4l6 5V3.500L5 9zM13.500 9.500q2 3 0 6M16.500 7q4 5.500 0 11" /><path d="M19.500 4.500q6 8 0 16" stroke="#8a9697" /></Svg>
          </TrayItem>
          <TrayItem $w={43}>
            <Svg w={26} h={24} stroke="#fff" strokeWidth="1.500"><path d="M10 3.500h14.500v14H5v-7M14 17.500v4M8 22h12" /><rect x="1" y="3.500" width="7" height="7" /><path d="M4.500 6v5" /></Svg>
          </TrayItem>
          <TrayItem $w={44}>ESP</TrayItem>
          <Clock $w={113} $align="center">11:07 a. m.<br />10/09/2021</Clock>
          <Notice>
            <Svg w={25} h={26}><path d="M0 1h25v19h-9v6l-6-6H0z" fill="#fff" /><path d="M4 6h17M4 10.500h17M4 15h11" stroke="#1a2b2c" strokeWidth="1.600" /></Svg>
            <Badge>1</Badge>
          </Notice>
          <PeekLine />
        </Tray>
      </Bar>
    </>
  );
}

function FileExplorer() {
  return (
    <Explorer>
      <Caption>
        <FolderMini />
        <CapSep $ml={9} $mr={11} />
        <Svg w={12} h={14}><path d="M.5 .5h8l3 3v10H.5z" fill="#fafafa" stroke="#bbb" /><path d="M2.500 7.500l2.500 3l5-5.500" stroke="#e2663a" strokeWidth="2" /></Svg>
        <CapGap />
        <FolderMini />
        <CaptionCaret><Svg w={8} h={8}><path d="M0 1h8M.5 3.500h7L4 7.500z" stroke="#222" fill="#222" strokeWidth=".8" /></Svg></CaptionCaret>
        <CapSep $ml={7} $mr={7} />
        Resultado
        <Grow />
        <CapButton><Svg w={11} stroke="#999"><path d="M0 5.500h10" /></Svg></CapButton>
        <CapButton><Svg w={11} stroke="#999"><path d="M.5 2.500h8v8h-8zM2.500 2.500v-2h8v8h-2" /></Svg></CapButton>
        <CapButton><Svg w={11} stroke="#999"><path d="M.5 .5l10 10M10.500 .5l-10 10" /></Svg></CapButton>
      </Caption>
      <TabRow>
        <RibbonTab $file $w={56}>File</RibbonTab>
        <RibbonTab $w={58}>Home</RibbonTab>
        <RibbonTab $w={58}>Share</RibbonTab>
        <RibbonTab $active $w={53}>View</RibbonTab>
        <Grow />
        <Collapse><Chevron w={9} h={5} c="#999" sw={1.3} up /></Collapse>
        <Help>?</Help>
      </TabRow>
      <Ribbon>
        <Group $w={168}>
          <GroupBody>
            <BigButton $w={70} $pt={10} $gap={8}>
              <Svg w={28} h={23}><rect x=".5" y="1" width="27" height="21" fill="#fff" stroke="#8b8e91" /><path d="M0 1.500h28" stroke="#75787b" strokeWidth="2" /><rect x="1" y="3" width="11" height="18.500" fill="#3d96e0" /><rect x="12" y="3" width="15" height="18.500" fill="#f4f5f6" /></Svg>
              <div>Navigation</div>
              <WithCaret>pane <Caret /></WithCaret>
            </BigButton>
            <SmallList $pt={13} $pl={1} $gap={13}>
              <SmallButton><PaneIcon x={8.5} w={4.5} />Preview pane</SmallButton>
              <SmallButton><PaneIcon x={8} w={5} />Details pane</SmallButton>
            </SmallList>
          </GroupBody>
          <GroupName>Panes</GroupName>
        </Group>
        <Group $w={362}>
          <GroupBody>
            <Gallery>
              <GalleryGrid>
                {galleryItems.map(([t, n]) => <GalleryItem key={t} $on={t === "det"}><Layout t={t} />{n}</GalleryItem>)}
              </GalleryGrid>
              <GalleryScroll>
                <Svg w={6} h={4}><path d="M0 3.500h6L3 0z" fill="#a9b0bb" /></Svg>
                <Caret c="#a9b0bb" />
                <Svg w={8} h={8}><path d="M0 1h8M.5 3.500h7L4 7z" stroke="#444c5c" fill="#444c5c" strokeWidth=".8" /></Svg>
              </GalleryScroll>
            </Gallery>
          </GroupBody>
          <GroupName>Layout</GroupName>
        </Group>
        <Group $w={188}>
          <GroupBody>
            <BigButton $w={50} $pt={7} $gap={6}>
              <Svg w={28}><rect x=".5" y="1" width="21" height="26" fill="#fff" stroke="#dde2e6" />
                {[3, 7, 11, 15, 19, 23].map((y) => <path key={y} d={`M2 ${y + 0.5}h18`} stroke="#a9cfe6" strokeWidth="2" strokeDasharray="5 1.500" />)}
                <path d="M25.500 2v24M23 4l2.500-3l2.500 3M23 24l2.500 3l2.500-3" stroke="#2d8bdc" strokeWidth="2" />
              </Svg>
              <div>Sort</div>
              <WithCaret>by <Caret /></WithCaret>
            </BigButton>
            <SmallList $pt={5} $pl={0} $gap={6}>
              <SmallButton><Svg w={14}><rect x="1.500" y="1.500" width="11" height="10" fill="#a8d4f7" /><path d="M.5 0v14M13.500 0v14" stroke="#b5b8ba" /></Svg>Group by <Caret /></SmallButton>
              <SmallButton><Svg w={14}><rect x=".5" y="2" width="13" height="11" fill="#fff" stroke="#a9acae" /><path d="M3.500 2v11M11 2v11" stroke="#a9acae" /><rect x="6.500" y="1" width="3.500" height="13" fill="#27c72d" /></Svg>Add columns <Caret /></SmallButton>
              <SmallButton><Svg w={14}><rect x=".5" y="3" width="13" height="10.500" fill="#fff" stroke="#a9acae" /><path d="M0 1.500h14" stroke="#5f9fd4" strokeWidth="2" /><path d="M0 5h14M4.500 3v10M9.500 3v10" stroke="#a9acae" /></Svg>Size all columns to fit</SmallButton>
            </SmallList>
          </GroupBody>
          <GroupName>Current view</GroupName>
        </Group>
        <Group $w={228}>
          <GroupBody $pl={7}>
            <SmallList $pt={6} $pl={0} $gap={6}>
              <SmallButton $g={5}><TickBox />Item check boxes</SmallButton>
              <SmallButton $g={5}><TickBox />File name extensions</SmallButton>
              <SmallButton $g={5}><TickBox />Hidden items</SmallButton>
            </SmallList>
            <Grow />
            <BigButton $w={88} $pt={7} $gap={6}>
              <Svg w={22} h={28}><path d="M.5 27.500V.5h16l5 5" fill="#fafafa" stroke="#9a9d9f" /><path d="M16.500 .5v5h5L.5 27.500" fill="#f4f5f6" stroke="#9a9d9f" /><path d="M21.500 8v19.500H2" stroke="#4da6e8" strokeDasharray="3 2" /></Svg>
              <div>Hide selected</div>
              <div>items</div>
            </BigButton>
          </GroupBody>
          <GroupName>Show/hide</GroupName>
        </Group>
        <Group $w={58}>
          <BigButton $w={57} $pt={10} $gap={8}>
            <Svg w={28} h={23}><rect x=".5" y="1" width="27" height="21" fill="#fafafa" stroke="#8b8e91" /><path d="M0 1.500h28" stroke="#75787b" strokeWidth="2" /><path d="M4 6l1.500 1.500L8 4.500M4 12l1.500 1.500L8 10.500M4 18l1.500 1.500L8 16.500" stroke="#2d8bdc" strokeWidth="1.500" /><path d="M11 6.500h13M11 12.500h13M11 18.500h13" stroke="#d3d5d7" /></Svg>
            <div>Options</div>
            <WithCaret><Caret /></WithCaret>
          </BigButton>
        </Group>
      </Ribbon>
      <AddressRow>
        <AddressNav>
          <NavIcon $w={31}><Arrow c="#555" /></NavIcon>
          <NavIcon $w={26}><Arrow c="#c8c8c8" dir={180} /></NavIcon>
          <NavIcon $w={18}><Chevron w={7} h={5} c="#777" sw={1.5} /></NavIcon>
          <Arrow c="#666" dir={90} />
        </AddressNav>
        <AddressBox>
          <FolderMini h={13} />
          {["This PC", "Documents", "UiPath", "ConsultasVarias", "DataAndResult", "Resultado"].map((t) => (
            <React.Fragment key={t}><CrumbSep><CrumbArrow /></CrumbSep>{t}</React.Fragment>
          ))}
          <Grow />
          <Chevron w={9} h={6} c="#666" sw={2} />
          <Refresh>
            <Svg w={12} stroke="#555" strokeWidth="1.700"><path d="M4 2.500A4.300 4.300 0 1 0 9 3.500" /><path d="M2.500 1h5v4.500" /></Svg>
          </Refresh>
        </AddressBox>
        <SearchBox>
          <Svg w={13} stroke="#888"><circle cx="8" cy="5" r="4.200" /><path d="M5 8L.5 12.500" /></Svg>
          Search Resultado
        </SearchBox>
      </AddressRow>
      <Panes>
        <Tree>
          {tree.map(([icon, name, o = {}], i) => (
            <TreeRow key={i} $root={o.root} $mt={o.mt} $on={o.on}>
              <TreeIcon>{treeArt[icon]}</TreeIcon>
              {name}
              {o.pin && <><Grow /><Pin /></>}
            </TreeRow>
          ))}
        </Tree>
        <List>
          <ListHead>
            <Check />
            <HeadCell $w={282} $pl={10}>Name<SortMark><Chevron w={9} h={5} c="#777" sw={1.1} up /></SortMark></HeadCell>
            <HeadCell $w={162} $pl={6}>Date modified</HeadCell>
            <HeadCell $w={135} $pl={6}>Type</HeadCell>
            <HeadCell $w={90} $pl={6}>Size</HeadCell>
          </ListHead>
          <FileRow>
            <Check><Svg w={11}><path d="M1 5l3 3.500L10 2" stroke="#222" strokeWidth="1.300" /></Svg></Check>
            <FileIcon><Svg w={14} h={16}><path d="M.5 .5h8l5 5v10H.5z" fill="#fff" stroke="#5cc24d" /><path d="M8 0h6v6z" fill="#1fa01f" /><rect x="3" y="7" width="8" height="6" fill="#6fd05c" /><path d="M3 9h8M3 11h8M5.500 7v6M8.500 7v6" stroke="#fff" strokeWidth=".8" /></Svg></FileIcon>
            <FileCell $w={259} $c="#111">Consultas.xlsx</FileCell>
            <FileCell $w={162}>10/09/2021 11:07 a. m.</FileCell>
            <FileCell $w={135}>Microsoft Excel Work...</FileCell>
            <FileCell $w={76} $align="right">8 KB</FileCell>
          </FileRow>
        </List>
      </Panes>
      <Status>
        1 item<StatSep />1 item selected&nbsp; 7,84 KB<StatSep />
        <Grow />
        <ViewToggle><Svg w={16} h={13} stroke="#777"><path d="M1.500 .5h3v3h-3zM1.500 4.500h3v3h-3zM1.500 8.500h3v3h-3z" fill="#fff" /><path d="M6 2h4M11 2h4M6 6h4M11 6h4M6 10h4M11 10h4" /></Svg></ViewToggle>
        <Svg w={14} h={12}><rect x=".5" y=".5" width="13" height="11" fill="#fff" stroke="#999" /><rect x="2" y="2" width="10" height="8" fill="#6fa9ea" /><path d="M2 5l5 2l5 1v2H2z" fill="#2e5c54" /></Svg>
      </Status>
    </Explorer>
  );
}

export default function App() {
  return (
    <>
      <Global />
      <Desktop>
        <Monitor><Browser /></Monitor>
        <Monitor $top={189}>
          <FileExplorer />
          <Bar $k={1} $line={18}>
            <TaskApps k={1} w={49} ml={2.5} />
            <Grow />
            <Clock $w={80} $align="right" $mr={7} $pt={2}>11:07 a. m.<br />10/09/2021</Clock>
          </Bar>
        </Monitor>
      </Desktop>
    </>
  );
}
